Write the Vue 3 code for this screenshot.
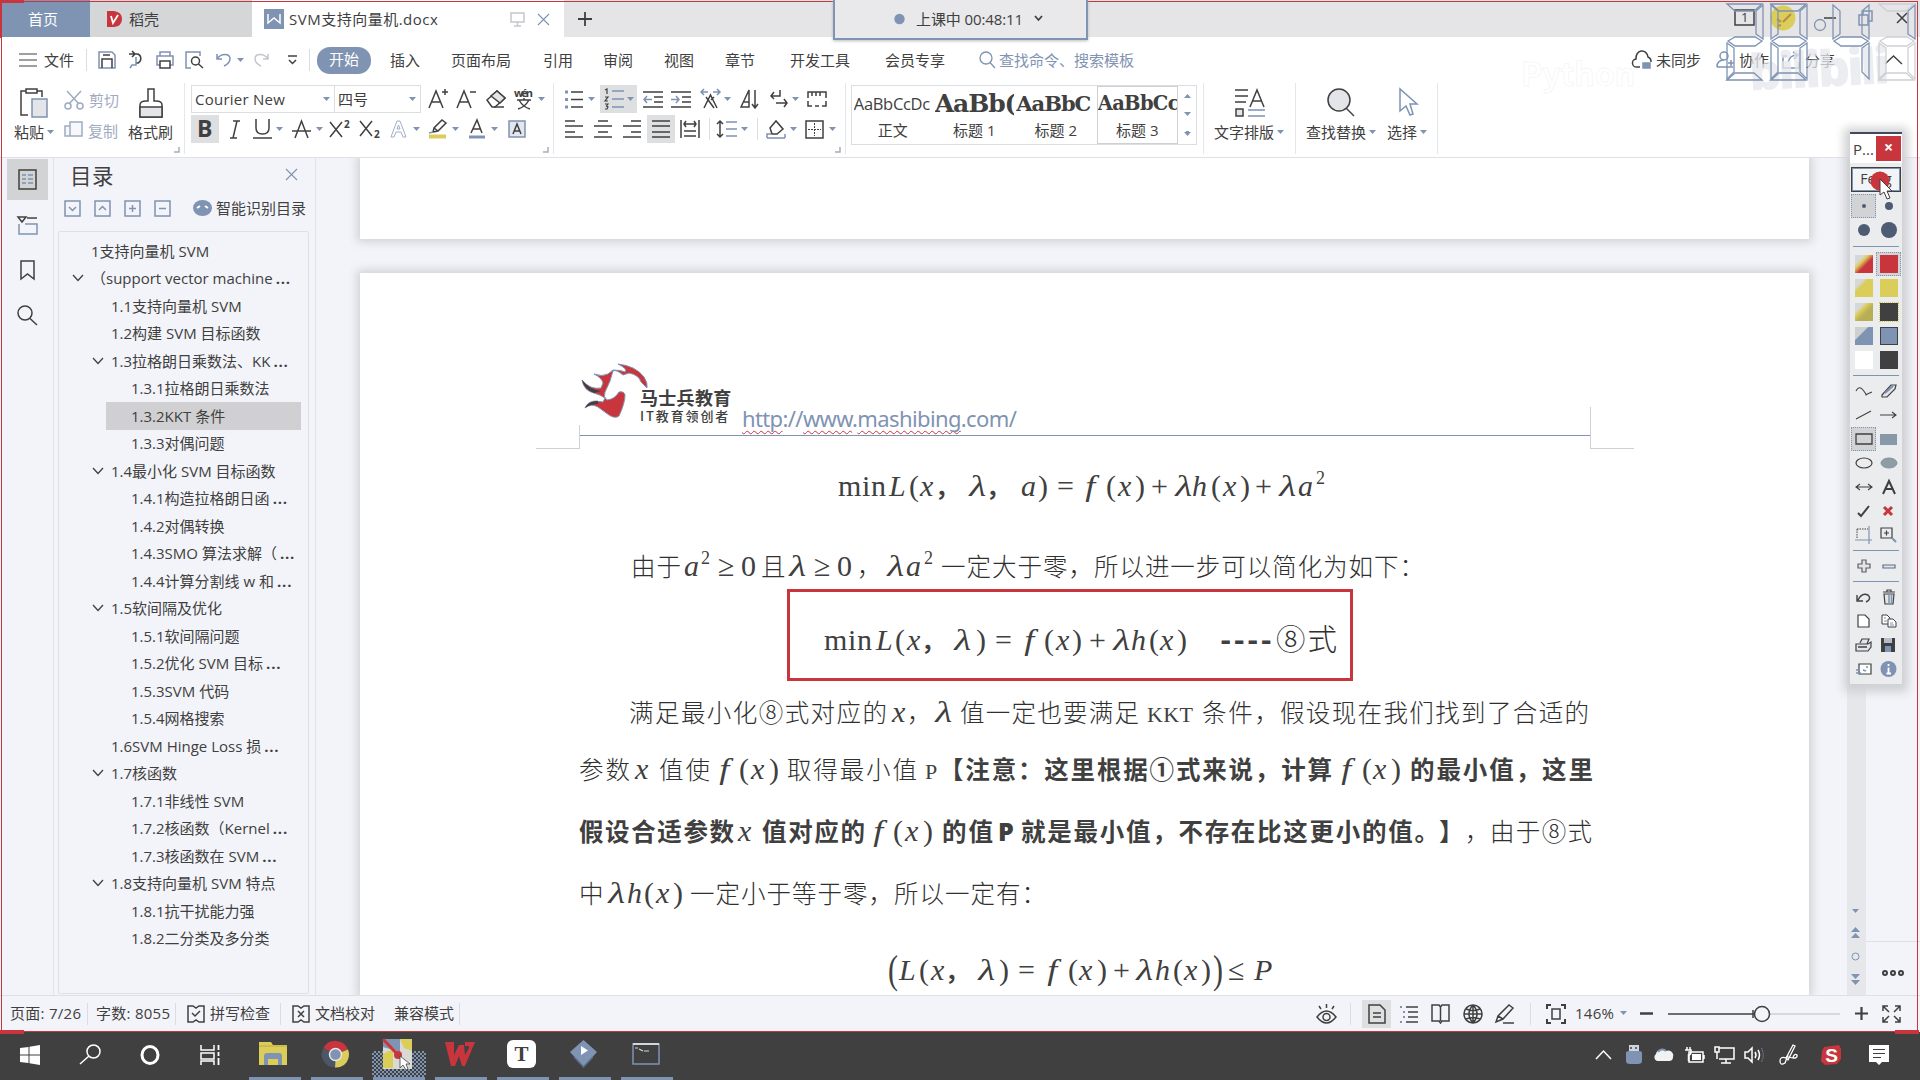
<script setup>
import { h } from 'vue'

const D = '#404040'
const B = '#7f93b2'
const R = '#c9353c'
const Y = '#dbcd5a'
const G = '#e4e5e9'

/* name: [width, height, markup] */
const p = (d, c = D, f = 'none', w = 1.5) => `<path d="${d}" stroke="${c}" fill="${f}" stroke-width="${w}"/>`
const t = (x, y, s, size, extra = '') => `<text x="${x}" y="${y}" font-size="${size}" stroke="none" fill="${D}" font-family="Open Sans, sans-serif" ${extra}>${s}</text>`
const lines = (arr, c = D, w = 1.7) => p(arr.map(([a, y, b]) => `M${a} ${y}H${b}`).join(''), c, 'none', w)

const icons = {
  caret: [7, 5, p('M0 0H7L3.5 4Z', 'none', B)],
  sep: [1, 22, p('M.5 0V22', '#dcdde1', 'none', 1)],
  burger: [18, 14, lines([[0, 1, 18], [0, 7, 18], [0, 13, 18]], D, 1.2)],
  save: [18, 18, p('M1 17V1H14L17 4V17Z', B) + p('M4 17V8H14V17M5 4H12', D)],
  exportI: [18, 18, p('M2 3H11A5 5 0 0 1 11 12H9M5 0L8 3L5 6', D) + p('M9 6V14H5L3 17', B)],
  print: [18, 18, p('M4 5V1H14V5M4 14H1V5H17V14H14', B) + p('M4 10H14V17H4Z', D)],
  preview: [19, 18, p('M6 17H1V1H15V5', B) + p('M14.5 10A4 4 0 1 0 6.5 10A4 4 0 1 0 14.5 10M13.5 13L18 17', D)],
  undo: [15, 14, p('M1 1V6H6M1 6C5 0 14 0 14 6Q14 10 8 13', B)],
  redo: [15, 14, p('M14 1V6H9M14 6C10 0 1 0 1 6Q1 10 7 13', '#c4c6cb')],
  more: [11, 10, p('M1 1H10', D) + p('M2 5L5.5 8.500L9 5', D)],
  search: [19, 18, p('M14 7A6 6 0 1 0 2 7A6 6 0 1 0 14 7M12 11.500L17 17', B, 'none', 1.3)],
  cloud: [21, 18, p('M8 16H5A4 4 0 0 1 4 8A6 7 0 0 1 16 6A5 5 0 0 1 19 11') + p('M11 12H18V17H11Z', B, B)],
  coop: [18, 18, p('M12 5A4 4 0 1 0 4 5A4 4 0 1 0 12 5M1 16Q1 9 8 9M1 16H17M12 12H18M15 9V15', B)],
  share: [19, 18, p('M5 5H1V17H17V11M6 11Q8 4 15 4M11 1L16 4L12 8', B)],
  up: [19, 10, p('M1 9L9.5 1L18 9', D, 'none', 1.4)],
  paste: [28, 30, p('M8 27H1V3H22V9') + p('M6 1H17V5H6Z', D, '#fff') + p('M12 11H27V29H12Z', B, G)],
  cut: [20, 19, p('M3 0L15 13M17 0L5 13', '#9fabc0') + p('M7 15A3 3 0 1 0 1 15A3 3 0 1 0 7 15M19 15A3 3 0 1 0 13 15A3 3 0 1 0 19 15', '#9fabc0')],
  copy: [19, 20, p('M6 15H1V5H6M6 1H18V15H6Z', '#9fabc0', '#f7f8fb')],
  brush: [24, 30, p('M1 29V17Q1 13 7 13H9V1H15V13H17Q23 13 23 17V29Z', D, '#fff') + p('M1 19H23V29H1Z', D, G)],
  aPlus: [20, 20, p('M1 19L8 2L15 19M4 13H12M14 3H20M17 0V6')],
  aMinus: [20, 20, p('M1 19L8 2L15 19M4 13H12M14 3H20')],
  eraser: [20, 18, p('M1 10L11 1L19 8L9 17H6Z', D, '#fff') + p('M5 6L14 13L19 8L11 1Z', D, G) + p('M8 17H18')],
  wen: [20, 22, t(0, 9, 'wén', 11, 'font-weight="bold" textLength="19"') + p('M3 12H17M10 10V12M5 12Q9 19 16 21M15 12Q11 19 4 21')],
  bold: [16, 20, t(0, 18, 'B', 23, 'font-weight="bold"')],
  italic: [12, 19, p('M4 1H11M1 18H8M8 1L4 18')],
  under: [20, 20, p('M3 0V9Q3 15 9.5 15T16 9V0M0 19H19')],
  strike: [19, 18, p('M3 18L9.500 1L16 18M0 11H19')],
  supX: [21, 18, p('M0 2L12 17M12 2L0 17') + t(14, 8, '2', 10, 'font-weight="bold"')],
  subX: [21, 18, p('M0 1L12 16M12 1L0 16') + t(14, 18, '2', 10, 'font-weight="bold"')],
  outA: [18, 18, p('M1 17L7 1H10L16 17H13L11 12H6L4 17ZM7 9H10L8.500 5Z', '#a3afc4', 'none', 1)],
  marker: [21, 20, p('M1 17.500H18', Y, 'none', 4) + p('M5 13L6 9L14 1L18 4L10 12L5 13ZM6 9L10 12', D) + p('M1 14L5 13', B)],
  colA: [18, 19, p('M3 13L9 0L14 13M5 9H12', D) + p('M1 17H17', B, 'none', 3)],
  boxA: [18, 18, p('M1 1H17V17H1Z', B, '#e3e6ee') + p('M5 14L9 4L13 14M6 11H12')],
  bullets: [20, 19, lines([[7, 2, 19], [7, 9.5, 19], [7, 17, 19]]) + p('M1 2H4M1 9.500H4M1 17H4', B, 'none', 3)],
  numbers: [30, 20, p('M8 2H20M8 10H20M8 18H20', B) + p('M1 1L3 0V5M1 8H4L1 12H4M1 15H4L2.500 17L4 18L3 20H1', D, 'none', 1.2) + p('M23 8H30L26.500 12Z', 'none', B)],
  outdent: [20, 17, lines([[0, 1, 20], [11, 6, 20], [11, 11, 20], [0, 16, 20]]) + p('M9 8.500H1M4 5L1 8.500L4 12', B)],
  indent: [20, 17, lines([[0, 1, 20], [11, 6, 20], [11, 11, 20], [0, 16, 20]]) + p('M0 8.500H8M5 5L8 8.500L5 12', B)],
  widthA: [21, 20, p('M1 3H8M13 3H20M4 0L1 3L4 6M17 0L20 3L17 6', B) + p('M4 19L10.500 6L17 19M6 8L14 19M14 8L11 11')],
  sortA: [19, 20, p('M1 18L9 1V18Z', D) + p('M4 13H9', D) + p('M15 1V19M12 15L15 19L18 15', D)],
  wrap: [18, 20, p('M10 1V7H1M4 3L1 7L4 10', D) + p('M6 14H17M14 10L17 14L14 18', D)],
  ruler: [20, 16, p('M1 7V1H19V7M5 1V5M9 1V5M13 1V5') + p('M1 10V15H5M8 15H12M15 15H19V10', D, 'none', 1.5)],
  alignL: [18, 18, lines([[0, 1, 10], [0, 6, 18], [0, 12, 10], [0, 17, 18]])],
  alignC: [18, 18, lines([[4, 1, 14], [0, 6, 18], [4, 12, 14], [0, 17, 18]])],
  alignR: [18, 18, lines([[8, 1, 18], [0, 6, 18], [8, 12, 18], [0, 17, 18]])],
  justify: [18, 18, lines([[0, 1, 18], [0, 6, 18], [0, 12, 18], [0, 17, 18]])],
  distrib: [20, 18, p('M1 0V18M19 0V18M4 4H16M6 1L4 4L6 7M14 1L16 4L14 7') + lines([[4, 11, 16], [4, 16, 16]])],
  spacing: [20, 18, p('M3 1V17M0 4L3 1L6 4M0 14L3 17L6 14') + lines([[9, 2, 20], [9, 9, 20], [9, 16, 20]], B)],
  fill: [20, 19, p('M4 8L10 1L17 9L11 14H6Z') + p('M1 18V14H5M19 18V14M1 18H19', B)],
  border: [19, 19, p('M1 1H18V18H1Z') + '<path d="M9.500 3V16M3 9.500H16" stroke="#404040" stroke-dasharray="2 1"/>'],
  corner: [6, 6, p('M5 0V5H0', '#a9adb6')],
  typeset: [30, 28, lines([[0, 1, 13], [0, 7, 13], [0, 13, 11]]) + p('M15 18L22 1L29 18M18 12H26') + p('M1 20H8V27H1Z', D, G) + lines([[13, 21, 30], [13, 27, 30]], B)],
  find: [28, 29, `<ellipse cx="12" cy="12" rx="11" ry="11" fill="${G}" stroke="${D}" stroke-width="1.500"/>` + p('M19 20L27 28')],
  pointer: [19, 29, p('M1 1V23L7 18L11 27L14 26L11 16H18Z', B, '#fff')],
  docLines: [19, 21, p('M1 1H18V20H1Z') + p('M4 6H8M10 6H15M4 10H8M10 10H15M4 14H8M10 14H15', B)],
  outline: [20, 19, p('M0 1H8L4 6ZM9 2H19') + p('M1 8V18H19V8H7', B)],
  bookmark: [15, 21, p('M1 1H14V19L7.500 14L1 19Z')],
  searchL: [21, 21, p('M15 8A7 7 0 1 0 1 8A7 7 0 1 0 15 8M13 13.500L20 20')],
  x: [13, 13, p('M1 1L12 12M12 1L1 12', B, 'none', 1.1)],
  boxDown: [17, 17, p('M1 1H16V16H1Z', B) + p('M5 7L8.500 10.500L12 7', B)],
  boxUp: [17, 17, p('M1 1H16V16H1Z', B) + p('M5 10L8.500 6.500L12 10', B)],
  boxPlus: [17, 17, p('M1 1H16V16H1Z', B) + p('M5 8.500H12M8.500 5V12', B)],
  boxMinus: [17, 17, p('M1 1H16V16H1Z', B) + p('M5 8.500H12', B)],
  ai: [19, 16, `<ellipse cx="9.500" cy="8" rx="9.500" ry="8" fill="${B}"/>` + p('M4 8L7 6M12 6L15 8', '#fff', 'none', 2)],
  down: [12, 8, p('M1 1L6 6.500L11 1', D, 'none', 1.3)],
  okBook: [18, 18, p('M1 1H6L9 3L12 1H17V17H12L9 15L6 17H1Z') + p('M5 8L8 11L13 6', D)],
  xBook: [18, 18, p('M1 1H6L9 3L12 1H17V17H12L9 15L6 17H1Z') + p('M6 6L12 12M12 6L6 12', D)],
  eye: [21, 20, p('M1 13Q10.500 1 20 13Q10.500 25 1 13ZM10.500 0V4M3 2L5 5M18 2L16 5') + '<circle cx="10.500" cy="13" r="3.500" stroke="#404040" fill="none" stroke-width="1.500"/>'],
  pageV: [18, 20, p('M1 1H12L17 6V19H1Z') + p('M5 9H13M5 13H13')],
  listV: [18, 18, lines([[6, 2, 18], [8, 7, 18], [8, 12, 18], [6, 17, 18]]) + p('M0 2H2M3 7H5M3 12H5M0 17H2', B, 'none', 2)],
  book: [19, 20, p('M1 1H8L9.500 3L11 1H18V17H11L9.500 19L8 17H1ZM9.500 3V17')],
  globe: [20, 20, p('M19 10A9 9 0 1 0 1 10A9 9 0 1 0 19 10M1 10H19M10 1V19M10 1Q2 10 10 19M10 1Q18 10 10 19M3 5Q10 8 17 5M3 15Q10 12 17 15')],
  pen: [20, 20, p('M1 18L3 12L14 1L18 4L8 15L1 18ZM3 12L8 15M8 19H19')],
  fitP: [18, 18, p('M0 4V0H4M14 0H18V4M18 14V18H14M4 18H0V14', D, 'none', 2) + p('M5 4H13V14H5Z')],
  minus: [13, 3, p('M0 1.500H13', D, 'none', 2.5)],
  plusB: [13, 13, p('M0 6.500H13M6.500 0V13', D, 'none', 2.2)],
  plus: [14, 14, p('M0 7H14M7 0V14', D, 'none', 1.8)],
  slider: [172, 18, p('M0 9H86', D) + p('M102 9H172', '#cfd0d4') + p('M85 5V13') + '<circle cx="94" cy="9" r="7.500" stroke="#404040" fill="#f3f4f9" stroke-width="1.500"/>'],
  full: [19, 18, p('M1 6V1H6M1 1L7 7M13 1H18V6M18 1L12 7M1 12V17H6M1 17L7 11M13 17H18V12M18 17L12 11')],
  monitor: [15, 15, p('M1 1H14V10H1ZM7.500 10V14M4 14H11', '#c6c8cc')],
  docer: [15, 18, p('M0 1H7Q15 2 15 9T7 17H0ZM4 5', 'none', R) + p('M4 6L6 13L11 5', '#fff', 'none', 1.8)],
  wps: [20, 20, p('M0 0H20V20H0Z', 'none', B) + p('M4 5V14L10 9L16 14V5', '#fff')],
  dot: [11, 12, `<circle cx="5.500" cy="6" r="5.200" fill="${B}"/>`],
  downB: [9, 7, p('M1 1L4.500 5L8 1', D, 'none', 1.8)],
  badge1: [21, 17, p('M1 1H20V16H1Z', D) + t(7, 13, '1', 13)],
  avatar: [26, 26, `<circle cx="13" cy="13" r="12.500" fill="${Y}"/>` + p('M7 14L11 17M13 17L21 9M8 21L11 20', '#b98b4a', 'none', 2)],
  min: [12, 2, p('M0 1H12')],
  restore: [15, 16, p('M5 5V1H14V11H10M1 5H10V15H1Z', B)],
  close: [12, 12, p('M1 1L11 11M11 1L1 11')],
  /* taskbar */
  win: [20, 20, p('M0 3L8.500 2V9.500H0ZM9.500 1.800L20 0V9.500H9.500ZM0 10.500H8.500V18L0 17ZM9.500 10.500H20V20L9.500 18.200Z', 'none', '#fff')],
  tSearch: [22, 21, p('M21 7.500A6.500 6.500 0 1 0 8 7.500A6.500 6.500 0 1 0 21 7.500M10 12L1 20', '#fff')],
  ring: [20, 20, p('M18 10A8 8.500 0 1 0 2 10A8 8.500 0 1 0 18 10', '#fff', 'none', 3)],
  tview: [21, 20, p('M1 0V5H14V0M1 8H14V14H1ZM1 20V16H14V20', '#fff') + p('M18.500 0V5M18.500 7V11M18.500 13V20', '#fff', 'none', 1.8)],
  folder: [29, 24, p('M0 0H12L14 3H28V23H0Z', 'none', Y) + p('M0 4H28', '#c5a83f', 'none', 1) + p('M5 23V14Q5 11 8 11H20Q23 11 23 14V23H19V17H9V23Z', 'none', B)],
  chrome: [27, 27, p('M13.500 13.500L1.500 7A13.500 13.500 0 0 1 26 8.500Z', 'none', R) + p('M13.500 13.500L26 8.500A13 13 0 0 1 13 26.500Z', 'none', Y) + p('M13.500 13.500L1.500 7A13 13 0 0 0 13 26.500Z', 'none', '#4b5666') + `<circle cx="13.500" cy="13.500" r="6" fill="${B}" stroke="#e8e8e8" stroke-width="1.500"/>`],
  paint: [31, 31, p('M1 0H30V30H1Z', 'none', '#d9d9d6') + p('M1 0H18V13L1 8Z', 'none', B) + p('M18 0H30V12L22 9ZM1 15L11 10V29H1Z', 'none', Y) + p('M1 0L15 15', R, 'none', 3) + `<circle cx="16" cy="16" r="4" fill="${R}"/>` + p('M18 17V29L21 26L24 31L26 30L24 25H28Z', D, '#fff', 0.8)],
  wpsR: [30, 24, p('M0 0H9L9 13L14 3H19L20 13L24 6V4H20V0H30L20 24H17L14 14L10 24H6L1 4Z', 'none', R)],
  tApp: [29, 28, `<rect width="29" height="28" rx="6" fill="#fff"/><text x="14.500" y="21" font-size="21" font-weight="bold" fill="${D}" text-anchor="middle" font-family="Liberation Serif, serif">T</text>`],
  gem: [29, 28, p('M14.500 0L28 12L14.500 27L1 12Z', 'none', B) + p('M5 17L14.500 27L24 17', '#596a86') + p('M12 6V15L19 10.500Z', 'none', '#fff')],
  term: [28, 22, p('M1 1H27V21H1Z', B) + p('M1 1H27', '#d2d6de', 'none', 2) + p('M3 5H6M7 6L11 8', '#d2d6de', 'none', 1.200) + p('M12 8H17', '#d2d6de', 'none', 1)],
  tUp: [17, 10, p('M1 9L8.500 1L16 9', '#fff')],
  usb: [16, 20, p('M3 0H13V6H3Z', 'none', '#cfd5e0') + p('M0 8Q0 6 3 6H13Q16 6 16 8V16Q16 19 12 19H4Q0 19 0 16Z', 'none', B) + p('M5 2V4M10 2V4')],
  tCloud: [21, 14, p('M4 13A4 4 0 0 1 3 6A6 6 0 0 1 13 3A5 5 0 0 1 20 9Q20 13 16 13Z', 'none', '#f1f2f4') + p('M5 4A5 5 0 0 1 13 3', B, 'none', 2)],
  battery: [21, 16, p('M5 5H19V15H5ZM20 8V12', '#fff') + p('M8 7H17V13H8Z', 'none', '#fff') + p('M3 0V3M6 0V3M1 3H7V5Q7 8 4.500 8V14', '#fff')],
  pc: [21, 18, p('M5 2H20V13H5M12 13V17M7 17H17M1 1H5V6H1ZM3 6V13', '#fff')],
  speaker: [21, 16, p('M1 5H4L8 1V15L4 11H1ZM11 5Q13 8 11 11M14 3Q17 8 14 13', '#fff') + '<path d="M17.500 1Q21 8 17.500 15" stroke="#7f93b2" fill="none" stroke-dasharray="1.500 1"/>'],
  tPen: [21, 20, p('M7 13L14 0L16 1L9 15ZM7 13Q1 11 1 16T6 18L9 10M9 12Q19 15 18 10Q15 8 14 13', '#fff', 'none', 1.3)],
  sogou: [21, 20, p('M3 2L18 0L20 4V14L16 19L4 20L0 16L1 6Z', 'none', R) + '<text x="10.500" y="17" font-size="19" font-weight="bold" fill="#fff" text-anchor="middle" font-family="Liberation Sans, sans-serif">S</text>'],
  note: [21, 20, p('M0 0H20V17H13L10 20L7 17H0Z', 'none', '#fff') + p('M4 4.500H16M4 8.500H16M4 12.500H12', D, 'none', 1.2)],
  /* drawing palette */
  curve: [18, 12, p('M1 6Q4 0 8 5T11 10T17 7', D, 'none', 1.1)],
  rubber: [16, 14, p('M1 11L10 1H15L14 5L6 13H1Z', D, G, 1.2) + p('M4 9L12 2', B, 'none', 2)],
  line: [17, 10, p('M1 9L16 1', D, 'none', 1.1)],
  arrow: [18, 8, p('M0 4H16M12 1L16 4L12 7', D, 'none', 1.1)],
  rect: [18, 12, p('M1 1H17V11H1Z', D, 'none', 1.3)],
  rectF: [17, 11, p('M0 0H17V11H0Z', 'none', '#8798a8')],
  oval: [18, 12, `<ellipse cx="9" cy="6" rx="8" ry="5" fill="none" stroke="${D}" stroke-width="1.200"/>`],
  ovalF: [18, 12, '<ellipse cx="9" cy="6" rx="8" ry="5" fill="#8f9ca0" stroke="#7f93b2"/>'],
  both: [18, 8, p('M1 4H17M5 1L1 4L5 7M13 1L17 4L13 7', D, 'none', 1.1)],
  letterA: [14, 15, p('M1 14L7 1L13 14M3 9H11', D, 'none', 2)],
  tick: [13, 13, p('M1 8L4 11L12 1', D, 'none', 2)],
  cross: [11, 11, p('M1 1L9 9M9 1L1 9', R, 'none', 3)],
  crop: [18, 18, '<path d="M2 3H13M2 3V13" stroke="#404040" stroke-dasharray="1.500 1"/>' + p('M14 0V18M0 14H17', B, 'none', 1.2)],
  zoomP: [17, 16, p('M1 1H12V11H1ZM4 6H9M6.500 3.500V8.500', D, 'none', 1.2) + p('M12 11L16 15', B, 'none', 2)],
  plusO: [14, 14, p('M5 1H9V5H13V9H9V13H5V9H1V5H5Z', '#5b5f66', G, 1.2)],
  minusO: [14, 5, p('M1 1H13V4H1Z', '#5b6f8e', G, 1.2)],
  undoB: [15, 11, p('M1 3V9H7M2 8Q6 0 12 3Q16 7 10 10', D, 'none', 1.4)],
  trash: [14, 16, p('M1 3H13M5 3V1H9V3M2 5H12L11 15H3Z', D, G, 1.2) + p('M7 6V14M9.500 6V14', B, 'none', 1.5)],
  page: [13, 14, p('M1 1H8L12 5V13H1Z', D, '#fff', 1.2)],
  pages: [16, 14, p('M1 1H6L9 4V10H1Z', D, '#fff', 1) + p('M7 5H12L15 8V13H7Z', D, '#fff', 1) + p('M3 4H5M3 7H6M9 9H12M9 11H13', B, 'none', 1)],
  printer: [17, 14, p('M5 5L7 1H14L12 6M1 6H13L16 4V9L13 13H1Z', D, G, 1.2) + p('M3 9H12', D)],
  disk: [15, 14, p('M0 0H14V14H0Z', 'none', D) + p('M3 0H11V5H3Z', 'none', '#b5bccb') + p('M4 8H10V14H4Z', 'none', B)],
  mail: [16, 12, p('M3 1H15V11H3Z', D, '#fff', 1.2) + p('M10 4H12M7 7L10 8M0 7H4M0 10H5', B)],
  info: [17, 16, `<circle cx="8.500" cy="8" r="8" fill="${B}"/>` + p('M8.500 3V5M8.500 6.500V12M6.500 12.500H11', '#fff', 'none', 1.8)],
}

const Ico = ({ n }) => {
  const [w, hh, m] = icons[n]
  return h('svg', { width: w, height: hh, viewBox: `0 0 ${w} ${hh}`, class: 'ico', fill: 'none', innerHTML: m })
}
Ico.props = ['n']

/* Spreads letters so the run takes the given width. */
const spread = (el, w) => {
  const n = [...el.textContent].length
  el.style.letterSpacing = `${(w - el.getBoundingClientRect().width) / Math.max(1, n - 1)}px`
}

/* A row of cells; each cell runs up to the start of the next one. item: [start, text | @icon, class, width] */
const Lane = ({ from = 0, items }) => {
  const cells = [h('i', { class: 'cell', style: { width: `${items[0][0] - from}px` } })]
  items.forEach(([x, v, c = '', w], k) => {
    const next = items[k + 1]
    const style = next ? { width: `${next[0] - x}px` } : {}
    let inner
    if (v[0] === '@') {
      inner = c ? h('span', { class: ['hold', c], style: { width: `${w}px` } }, [h(Ico, { n: v.slice(1) })]) : h(Ico, { n: v.slice(1) })
    } else {
      inner = h('span', { class: ['run', c, { lam: v === 'λ', eff: v === 'f' }], onVnodeMounted: (vn) => w && spread(vn.el, w) }, v)
    }
    cells.push(h('div', { class: 'cell', style }, [inner]))
  })
  return h('div', { class: 'lane' }, cells)
}
Lane.props = ['from', 'items']

const menu = [
  [19, '@burger'], [44, '文件'], [86, '@sep'], [98, '@save'], [127, '@exportI'], [156, '@print'], [185, '@preview'], [216, '@undo'], [237, '@caret'],
  [254, '@redo'], [287, '@more'], [309, '@sep'], [317, '开始', 'pill'], [390, '插入'], [451, '页面布局'], [543, '引用'], [603, '审阅'], [664, '视图'],
  [725, '章节'], [790, '开发工具'], [885, '会员专享'], [978, '@search'], [999, '查找命令、搜索模板', 'blue'], [1632, '@cloud'], [1656, '未同步'],
  [1716, '@coop'], [1739, '协作'], [1782, '@share'], [1805, '分享'], [1884, '@up'],
]
const font1 = [[428, '@aPlus'], [456, '@aMinus'], [486, '@eraser'], [514, '@wen'], [538, '@caret']]
const font2 = [
  [191, '@bold', 'sel', 28], [229, '@italic'], [253, '@under'], [276, '@caret'], [292, '@strike'], [316, '@caret'], [330, '@supX'], [360, '@subX'],
  [390, '@outA'], [413, '@caret'], [428, '@marker'], [452, '@caret'], [468, '@colA'], [491, '@caret'], [508, '@boxA'],
]
const para1 = [
  [564, '@bullets'], [588, '@caret'], [600, '@numbers', 'sel', 37], [643, '@outdent'], [671, '@indent'], [700, '@widthA'], [724, '@caret'],
  [740, '@sortA'], [770, '@wrap'], [792, '@caret'], [807, '@ruler'],
]
const para2 = [
  [565, '@alignL'], [594, '@alignC'], [623, '@alignR'], [647, '@justify', 'sel', 28], [680, '@distrib'], [709, '@sep'], [717, '@spacing'],
  [741, '@caret'], [757, '@sep'], [766, '@fill'], [790, '@caret'], [805, '@border'], [829, '@caret'],
]
const styles = [['AaBbCcDc', '正文', 's1'], ['AaBb(', '标题 1', 's2'], ['AaBbC', '标题 2', 's3'], ['AaBbCc', '标题 3', 's4']]

const outline = [
  [0, '1支持向量机 SVM'], [0, '（support vector machine', 1, 1], [1, '1.1支持向量机 SVM'], [1, '1.2构建 SVM 目标函数'],
  [1, '1.3拉格朗日乘数法、KK', 1, 1], [2, '1.3.1拉格朗日乘数法'], [2, '1.3.2KKT 条件'], [2, '1.3.3对偶问题'], [1, '1.4最小化 SVM 目标函数', 0, 1],
  [2, '1.4.1构造拉格朗日函', 1], [2, '1.4.2对偶转换'], [2, '1.4.3SMO 算法求解（', 1], [2, '1.4.4计算分割线 w 和', 1], [1, '1.5软间隔及优化', 0, 1],
  [2, '1.5.1软间隔问题'], [2, '1.5.2优化 SVM 目标', 1], [2, '1.5.3SVM 代码'], [2, '1.5.4网格搜索'], [1, '1.6SVM Hinge Loss 损', 1],
  [1, '1.7核函数', 0, 1], [2, '1.7.1非线性 SVM'], [2, '1.7.2核函数（Kernel', 1], [2, '1.7.3核函数在 SVM', 1], [1, '1.8支持向量机 SVM 特点', 0, 1],
  [2, '1.8.1抗干扰能力强'], [2, '1.8.2二分类及多分类'],
]

const m = 'm'
const mi = 'm it'
const text = {
  a: [[838, 'min', m, 48], [889, 'L', mi], [909, '(', m], [920, 'x', mi], [938, '，', 'cm'], [970, 'λ', mi], [989, '，', 'cm'], [1021, 'a', mi], [1038, ')', m], [1057, '=', m],
    [1087, 'f', mi], [1106, '(', m], [1118, 'x', mi], [1135, ')', m], [1151, '+', m], [1176, 'λ', mi], [1192, 'h', mi], [1211, '(', m], [1223, 'x', mi], [1240, ')', m], [1255, '+', m],
    [1280, 'λ', mi], [1298, 'a', mi], [1316, '2', 'sup']],
  b: [[631, '由于', 'z', 50], [684, 'a', mi], [701, '2', 'sup'], [718, '≥', m], [741, '0', m], [761, '且', 'z'], [790, 'λ', mi], [814, '≥', m], [837, '0', m], [857, '，', 'z'], [888, 'λ', mi],
    [906, 'a', mi], [924, '2', 'sup'], [941, '一定大于零，', 'z', 152], [1094, '所以进一步可以简化为如下：', 'z', 330]],
  c: [[824, 'min', m, 48], [876, 'L', mi], [895, '(', m], [907, 'x', mi], [924, '，', 'cm'], [955, 'λ', mi], [976, ')', m], [995, '=', m], [1026, 'f', mi], [1044, '(', m], [1056, 'x', mi],
    [1072, ')', m], [1089, '+', m], [1114, 'λ', mi], [1131, 'h', mi], [1149, '(', m], [1160, 'x', mi], [1177, ')', m], [1217, '----', 'dash', 58], [1276, '⑧式', 'zz', 61]],
  d: [[629, '满足最小化⑧式对应的', 'z', 258], [892, 'x', mi], [907, '，', 'z'], [936, 'λ', mi], [960, '值一定也要满足', 'z', 179], [1147, 'KKT', 'mono', 46], [1202, '条件，', 'z', 77], [1280, '假设现在我们找到了合适的', 'z', 309]],
  e: [[579, '参数', 'z', 51], [635, 'x', mi], [659, '值使', 'z', 51], [721, 'f', mi], [739, '(', m], [751, 'x', mi], [769, ')', m], [787, '取得最小值', 'z', 130], [925, 'P', 'mono'],
    [939, '【注意：这里根据①式来说，计算', 'z bd', 393], [1343, 'f', mi], [1362, '(', m], [1373, 'x', mi], [1391, ')', m], [1410, '的最小值，这里', 'z bd', 183]],
  f: [[579, '假设合适参数', 'z bd', 155], [738, 'x', mi], [762, '值对应的', 'z bd', 103], [875, 'f', mi], [893, '(', m], [905, 'x', mi], [923, ')', m], [942, '的值', 'z bd', 51], [998, 'P', 'pb'],
    [1021, '就是最小值，不存在比这更小的值。', 'z bd', 418], [1439, '】', 'z bd'], [1465, '，', 'z'], [1490, '由于⑧式', 'z', 102]],
  g: [[579, '中', 'z'], [609, 'λ', mi], [627, 'h', mi], [644, '(', m], [656, 'x', mi], [673, ')', m], [690, '一定小于等于零，所以一定有：', 'z', 356]],
  h: [[888, '(', 'm tall'], [899, 'L', mi], [919, '(', m], [931, 'x', mi], [948, '，', 'cm'], [979, 'λ', mi], [999, ')', m], [1018, '=', m], [1049, 'f', mi], [1068, '(', m], [1079, 'x', mi],
    [1097, ')', m], [1113, '+', m], [1137, 'λ', mi], [1155, 'h', mi], [1173, '(', m], [1184, 'x', mi], [1201, ')', m], [1213, ')', 'm tall'], [1228, '≤', m], [1254, 'P', mi]],
}

const statusItems = [
  [10, '页面: 7/26', '', 71], [87, '@sep'], [96, '字数: 8055', '', 74], [175, '@sep'], [187, '@okBook'], [210, '拼写检查'], [280, '@sep'], [292, '@xBook'], [315, '文档校对'],
  [394, '兼容模式'], [459, '@sep'], [1316, '@eye'], [1350, '@sep'], [1362, '@pageV', 'sel', 29], [1400, '@listV'], [1431, '@book'], [1463, '@globe'], [1495, '@pen'], [1530, '@sep'],
  [1547, '@fitP'], [1575, '146%', '', 39], [1620, '@caret'], [1640, '@minus'], [1668, '@slider'], [1855, '@plusB'], [1882, '@full'],
]
const taskLeft = [[20, '@win'], [79, '@tSearch'], [140, '@ring'], [200, '@tview']]
const apps = ['folder', 'chrome', 'paint', 'wpsR', 'tApp', 'gem', 'term']
const tray = [[1595, '@tUp'], [1626, '@usb'], [1653, '@tCloud'], [1684, '@battery'], [1714, '@pc'], [1744, '@speaker'], [1779, '@tPen'], [1821, '@sogou'], [1869, '@note']]

const swatches = [['#c9353c', '#c9353c', 'on'], ['#dbcd5a', '#dbcd5a', ''], ['#b9ae55', '#404040', 'dot'], ['#7f93b2', '#7f93b2', 'edge'], ['#ffffff', '#404040', '']]
const tools1 = ['curve', 'rubber', 'line', 'arrow', 'rect', 'rectF', 'oval', 'ovalF', 'both', 'letterA', 'tick', 'cross', 'crop', 'zoomP']
const tools2 = ['undoB', 'trash', 'page', 'pages', 'printer', 'disk', 'mail', 'info']

/* seven-segment outlines of the overlaid clock */
const seg = {
  t: 'M1 1H36L28 8H9Z', tl: 'M1 2L8 8V31L1 36Z', tr: 'M37 2L30 8V31L37 36Z', m: 'M2 38L9 34H29L36 38L29 43H9Z',
  bl: 'M1 40L8 45V69L1 76Z', br: 'M37 40L30 45V69L37 76Z', b: 'M1 77L9 70H28L36 77Z',
}
const digits = [[2, ['t', 'tr', 'm', 'bl', 'b'], B], [46, ['t', 'tl', 'tr', 'm', 'bl', 'br', 'b'], B], [108, ['tl', 'tr', 'm', 'br'], B], [154, ['tr'], B], [154, ['t', 'm', 'bl', 'br', 'b'], '#cdd0d6']]
</script>

<template>
  <div class="app">
    <header class="tabs">
      <div class="tab home">首页</div>
      <div class="tab docer"><Ico n="docer" />稻壳</div>
      <div class="tab active">
        <Ico n="wps" /><span class="name">SVM支持向量机.docx</span>
        <Ico n="monitor" class="mon" /><Ico n="x" />
      </div>
      <Ico n="plus" class="add" />
      <div class="timer"><Ico n="dot" /><span>上课中 00:48:11</span><Ico n="downB" /></div>
      <div class="win"><Ico n="badge1" /><Ico n="avatar" /><Ico n="min" /><Ico n="restore" /><Ico n="close" /></div>
    </header>

    <Lane class="menu" :items="menu" />

    <section class="ribbon">
      <div class="group clip">
        <div class="big paste"><Ico n="paste" /><span>粘贴<Ico n="caret" /></span></div>
        <div class="pair">
          <span><Ico n="cut" />剪切</span>
          <span><Ico n="copy" />复制</span>
        </div>
        <div class="big"><Ico n="brush" /><span>格式刷</span></div>
        <Ico n="corner" class="crn" />
      </div>
      <div class="group fontg">
        <div class="row1">
          <div class="combo fam"><span>Courier New</span><Ico n="caret" /></div>
          <div class="combo size"><span>四号</span><Ico n="caret" /></div>
          <Lane :from="421" :items="font1" />
        </div>
        <Lane class="row2" :from="185" :items="font2" />
        <Ico n="corner" class="crn" />
      </div>
      <div class="group parag">
        <Lane class="row1" :from="554" :items="para1" />
        <Lane class="row2" :from="554" :items="para2" />
        <Ico n="corner" class="crn" />
      </div>
      <div class="group styleg">
        <div class="gallery">
          <div v-for="s in styles" :key="s[1]" class="style" :class="s[2]"><b>{{ s[0] }}</b><span>{{ s[1] }}</span></div>
          <div class="scr"><Ico n="caret" class="flip" /><Ico n="caret" /><Ico n="caret" class="bar" /></div>
        </div>
      </div>
      <div class="group g5"><div class="big"><Ico n="typeset" /><span>文字排版<Ico n="caret" /></span></div></div>
      <div class="group g6">
        <div class="big"><Ico n="find" /><span>查找替换<Ico n="caret" /></span></div>
        <div class="big"><Ico n="pointer" /><span>选择<Ico n="caret" /></span></div>
      </div>
    </section>

    <main class="body">
      <nav class="rail">
        <div class="on"><Ico n="docLines" /></div>
        <div><Ico n="outline" /></div>
        <div><Ico n="bookmark" /></div>
        <div><Ico n="searchL" /></div>
      </nav>
      <aside class="toc">
        <div class="head"><span>目录</span><Ico n="x" /></div>
        <div class="acts"><Ico n="boxDown" /><Ico n="boxUp" /><Ico n="boxPlus" /><Ico n="boxMinus" /><Ico n="ai" class="ai" /><span>智能识别目录</span></div>
        <div class="tree">
          <div v-for="(o, k) in outline" :key="k" class="node" :class="['l' + o[0], { cur: k === 6 }]">
            <i class="chev"><Ico v-if="o[3]" n="down" /></i><span class="lbl">{{ o[1] }}</span><b v-if="o[2]">...</b>
          </div>
        </div>
      </aside>
      <div class="canvas">
        <div class="sheet prev"></div>
        <div class="sheet">
          <div class="head">
            <div class="mark left"></div>
            <div class="brand">
              <svg class="bull" width="68" height="56" viewBox="0 0 68 56">
                <path d="M37 1Q55 3 63 14Q67 20 66 25L60 19Q58 12 48 10L42 12Q35 6 32 8L29 18L24 29Q22 34 26 37Q34 36 38 29Q43 28 44 32Q44 40 38 53Q34 56 28 52L17 44Q10 40 4 45Q7 38 15 38L22 39L24 35Q20 32 13 30Q3 28 1 17Q9 27 20 25L22 20Q21 15 13 11Q21 14 27 11L32 7Q40 7 44 9Q47 6 37 1Z" fill="#c9353c" stroke="#7f93b2" stroke-width="1" />
                <path d="M1 17Q9 27 20 28L13 30Q3 26 1 17ZM4 45Q7 38 17 38L17 41Q9 41 4 45Z" fill="#404040" />
              </svg>
              <div class="names"><b>马士兵教育</b><span>IT教育领创者</span></div>
              <div class="url"><u>http</u>://<u>www</u>.<u>mashibing</u>.com/</div>
            </div>
            <div class="mark right"></div>
          </div>
          <Lane class="ln a" :from="360" :items="text.a" />
          <Lane class="ln b" :from="360" :items="text.b" />
          <div class="boxed"><Lane class="ln c" :from="790" :items="text.c" /></div>
          <Lane class="ln d" :from="360" :items="text.d" />
          <Lane class="ln e" :from="360" :items="text.e" />
          <Lane class="ln f" :from="360" :items="text.f" />
          <Lane class="ln g" :from="360" :items="text.g" />
          <Lane class="ln h" :from="360" :items="text.h" />
        </div>
      </div>
      <div class="vbar">
        <Ico n="caret" />
        <svg width="9" height="12" viewBox="0 0 9 12"><path d="M4.500 0L9 5H0ZM4.500 6L9 11H0Z" fill="#7f93b2" /></svg>
        <svg width="9" height="9" viewBox="0 0 9 9"><circle cx="4.500" cy="4.500" r="3.500" fill="none" stroke="#7f93b2" /></svg>
        <svg width="9" height="12" viewBox="0 0 9 12"><path d="M4.500 5L9 0H0ZM4.500 11L9 6H0Z" fill="#7f93b2" /></svg>
      </div>
      <div class="side"><div class="dots"><i></i><i></i><i></i></div></div>
    </main>

    <Lane class="status" :items="statusItems" />

    <footer class="taskbar">
      <Lane class="tl" :items="taskLeft" />
      <div class="apps"><div v-for="a in apps" :key="a" class="appi" :class="{ hot: a === 'paint' }"><Ico :n="a" /></div></div>
      <Lane class="tray" :from="1590" :items="tray" />
    </footer>

    <div class="palette">
      <div class="cap"><span>P...</span><b>×</b></div>
      <div class="field">Feng</div>
      <div class="sizes"><i class="cellp on"><em class="d1"></em></i><i class="cellp"><em class="d2"></em></i><i class="cellp"><em class="d3"></em></i><i class="cellp"><em class="d4"></em></i></div>
      <hr>
      <div class="swatches">
        <template v-for="(s, k) in swatches" :key="k">
          <i class="cellp"><em :class="{ half: k < 4 }" :style="{ '--c': s[0] }"></em></i>
          <i class="cellp" :class="s[2]"><em :style="{ '--c': s[1] }"></em></i>
        </template>
      </div>
      <hr>
      <div class="tools"><i v-for="n in tools1" :key="n" class="cellp" :class="{ on: n === 'rect' }"><Ico :n="n" /></i></div>
      <hr>
      <div class="tools"><i class="cellp"><Ico n="plusO" /></i><i class="cellp"><Ico n="minusO" /></i></div>
      <hr>
      <div class="tools"><i v-for="n in tools2" :key="n" class="cellp"><Ico :n="n" /></i></div>
      <svg class="cursor" width="26" height="30" viewBox="0 0 26 30">
        <circle cx="10" cy="10" r="9.500" fill="#c9353c" />
        <path d="M10 8V24L14 21L17 28L20 27L17 20H22Z" fill="#fff" stroke="#404040" />
      </svg>
    </div>

    <div class="stamp py">Python</div>
    <div class="stamp bili">bilibili</div>
    <svg class="clock" width="194" height="82" viewBox="0 0 194 82">
      <g v-for="(d, k) in digits" :key="k" :transform="`translate(${d[0]} 1)`" fill="none" :stroke="d[2]" stroke-width="1.300"><path v-for="s in d[1]" :key="s" :d="seg[s]" /></g>
      <circle cx="96" cy="23" r="5.500" fill="none" stroke="#7f93b2" stroke-width="1.300" />
    </svg>

    <div class="frame"><i class="c1"></i><i class="c2"></i><i class="c3"></i><i class="c4"></i><i class="c5"></i></div>
  </div>
</template>

<style>
body { margin: 0; background: #404040; overflow: hidden; }
</style>

<style scoped>
.app { position: relative; width: 1920px; height: 1080px; display: flex; flex-direction: column; overflow: hidden; color: #404040; background: #fff; font: 15px/20px "Open Sans", "Noto Sans CJK SC", sans-serif; }
.app :deep(.ico) { flex: none; display: block; overflow: visible; }
.app :deep(.lane) { display: flex; align-items: center; }
.app :deep(.cell) { flex: none; display: flex; align-items: center; white-space: nowrap; }
.app :deep(.run) { display: inline-block; flex: none; white-space: pre; }
.app :deep(.hold) { flex: none; display: flex; align-items: center; justify-content: center; height: 28px; }
.app :deep(.sel) { background: #dedfe1; }
.app :deep(.blue) { color: #7f93b2; }

.tabs { flex: none; height: 37px; display: flex; align-items: center; background: #e5e5e7; }
.tab { height: 37px; display: flex; align-items: center; padding-top: 1px; box-sizing: border-box; }
.home { width: 90px; justify-content: center; background: #7f93b2; color: #fff; padding-right: 4px; }
.docer { width: 162px; background: #d5d6d7; padding-left: 17px; gap: 7px; }
.active { width: 312px; background: #fff; padding-left: 12px; }
.active .name { width: 221px; padding-left: 5px; letter-spacing: 0.5px; }
.active .mon { margin-right: 12px; }
.add { margin-left: 14px; }
.timer { width: 255px; height: 40px; align-self: flex-start; margin-left: 241px; border: solid #7f93b2; border-width: 0 2px 2px; box-sizing: border-box; display: flex; align-items: center; gap: 11px; padding-left: 59px; padding-bottom: 1px; background: #e9e9eb; box-shadow: 0 1px 3px #bbb; z-index: 1; }
.timer span { letter-spacing: -0.1px; }
.win { display: flex; align-items: center; margin-left: auto; gap: 15px; padding: 0 12px 2px 0; }
.win > :nth-child(3) { margin-left: 13px; }
.win > :nth-child(4) { margin-left: 7px; }
.win > :nth-child(5) { margin-left: 8px; }

.menu { flex: none; height: 46px; box-sizing: border-box; }
.menu :deep(.run) { margin-top: -1px; }
.menu :deep(.pill) { width: 54px; height: 27px; line-height: 25px; text-align: center; border-radius: 13px; background: #7f93b2; color: #fff; margin-top: 0; }

.ribbon { flex: none; height: 75px; display: flex; border-bottom: 1px solid #dfe0e4; box-sizing: border-box; }
.group { position: relative; box-sizing: border-box; height: 71px; border-right: 1px solid #e6e7eb; padding-top: 2px; }
.crn { position: absolute; right: 4px; bottom: 1px; }
.clip { width: 185px; display: flex; }
.big { display: flex; flex-direction: column; align-items: center; padding-top: 3px; gap: 3px; line-height: 22px; }
.big > span { display: flex; align-items: center; gap: 3px; }
.paste { width: 40px; margin-left: 14px; }
.paste > :deep(.ico) { margin-right: 1px; }
.pair { margin-left: 10px; width: 64px; display: flex; flex-direction: column; gap: 9px; padding-top: 4px; color: #9fabc0; }
.pair span { display: flex; align-items: center; gap: 5px; line-height: 22px; }
.fontg { width: 369px; }
.row1 { display: flex; height: 28px; }
.row2 { height: 28px; margin-top: 2px; }
.combo { box-sizing: border-box; height: 28px; border: 1px solid #dcdde1; display: flex; align-items: center; justify-content: space-between; padding: 0 4px 0 3px; }
.fam { width: 144px; margin-left: 6px; }
.fam span { letter-spacing: 0.25px; }
.size { width: 86px; border-left: 0; }
.parag { width: 292px; }
.styleg { width: 358px; padding-left: 5px; }
.gallery { width: 346px; height: 60px; box-sizing: border-box; border: 1px solid #dcdde1; display: flex; }
.style { width: 81.500px; box-sizing: border-box; display: flex; flex-direction: column; align-items: center; border: 1px solid transparent; }
.style b { width: 78px; height: 33px; line-height: 34px; overflow: hidden; font-weight: 400; white-space: nowrap; font-size: 16.500px; letter-spacing: -0.3px; }
.style span { line-height: 21px; }
.s2 b, .s3 b, .s4 b { width: 79px; font-family: "DejaVu Serif", serif; font-weight: 700; }
.s2 b { font-size: 25px; letter-spacing: -1.100px; }
.s3 b { font-size: 21px; letter-spacing: -1px; }
.s4 b { font-size: 19.500px; letter-spacing: -0.700px; }
.s4 { border: 1px solid #cfd0d4; }
.scr { flex: 1; display: flex; flex-direction: column; align-items: center; justify-content: space-around; }
.flip { transform: rotate(180deg); }
.bar { box-shadow: 0 -3px 0 -2px #7f93b2; }
.g5 { width: 92px; padding-left: 10px; }
.g6 { width: 142px; display: flex; padding-left: 10px; gap: 11px; }
.g5 .big, .g6 .big { align-items: flex-start; }
.g5 .big > :deep(.ico) { margin: 1px 0 1px 21px; }
.g6 .big > :deep(.ico) { margin: 0 0 1px 21px; }
.g6 .big + .big > :deep(.ico) { margin-left: 12px; }

.body { flex: none; height: 837px; display: flex; background: #f3f4f9; }
.rail { width: 54px; border-right: 1px solid #e2e3e7; display: flex; flex-direction: column; padding: 1px 0 0 7px; box-sizing: border-box; gap: 4px; }
.rail div { width: 41px; height: 41px; display: flex; align-items: center; justify-content: center; }
.rail div + div { padding-top: 1px; box-sizing: border-box; }
.rail .on { background: #d2d3d5; }
.toc { width: 262px; box-sizing: border-box; border-right: 1px solid #e2e3e7; padding: 0 6px 1px 4px; display: flex; flex-direction: column; }
.toc .head { height: 36px; display: flex; align-items: center; justify-content: space-between; padding: 0 11px 0 12px; font-size: 21.500px; letter-spacing: 0.5px; }
.toc .head > :deep(.ico) { margin-top: -4px; }
.acts { height: 28px; display: flex; align-items: center; gap: 13px; padding-left: 6px; }
.acts .ai { margin-left: 9px; margin-right: -9px; }
.tree { flex: 1; margin-top: 9px; border: 1px solid #dfe0e4; box-sizing: border-box; padding-top: 5px; border-radius: 2px; }
.node { height: 27.500px; display: flex; align-items: center; white-space: nowrap; }
.node .chev { width: 20px; padding-left: 1px; box-sizing: border-box; }
.node b { margin-left: 3px; letter-spacing: 0.8px; }
.l0 { padding-left: 12px; }
.l1 { padding-left: 32px; }
.l2 { padding-left: 52px; }
.node.cur { margin: 0 7px 0 47px; padding-left: 5px; background: #d0d0d2; }

.canvas { flex: none; width: 1531px; display: flex; flex-direction: column; overflow: hidden; padding-left: 44px; box-sizing: border-box; }
.sheet { flex: none; width: 1449px; height: 722px; background: #fff; box-shadow: 0 0 9px 3px #d0d1d4; display: flex; flex-direction: column; }
.sheet.prev { height: 81px; margin-bottom: 34px; }
.sheet > .head { height: 176px; display: flex; align-items: flex-end; padding-left: 176px; }
.mark { box-sizing: border-box; width: 44px; border-bottom: 1px solid #cfd0d4; }
.mark.left { height: 24px; border-right: 1px solid #cfd0d4; }
.mark.right { height: 42px; border-left: 1px solid #cfd0d4; }
.brand { width: 1010px; height: 72px; margin-bottom: 13px; border-bottom: 1px solid #7f93b2; display: flex; }
.bull { margin-left: 1px; }
.names { margin-left: -9px; padding-top: 24px; display: flex; flex-direction: column; width: 101px; }
.names b { font: 700 18px/20px "Noto Sans CJK SC", sans-serif; letter-spacing: 0.3px; }
.names span { font: 500 13px/18px "Noto Sans CJK SC", sans-serif; letter-spacing: 1.900px; white-space: nowrap; }
.url { margin-left: 1px; padding-top: 40px; font: 22px/31px "Noto Sans", "Open Sans", sans-serif; color: #7f93b2; letter-spacing: -0.62px; white-space: nowrap; }
.url u { text-decoration: underline wavy #c9353c 1px; text-underline-offset: 3px; text-decoration-skip-ink: none; }
.app :deep(.ln) { flex: none; align-items: baseline; }
.app :deep(.ln .cell) { align-items: baseline; }
.ln.a { height: 94px; line-height: 74px; }
.ln.b { height: 46px; line-height: 45px; }
.boxed { width: 566px; height: 92px; margin-left: 427px; box-sizing: border-box; border: 3px solid #c9353c; }
.ln.c { line-height: 90px; height: 86px; }
.ln.d { height: 60px; line-height: 61px; }
.ln.e { height: 56px; line-height: 55px; }
.ln.f { height: 68px; line-height: 67px; }
.ln.g { height: 56px; line-height: 55px; }
.ln.h { height: 74px; line-height: 98px; overflow: hidden; }
.ln :deep(.m) { font-family: "Liberation Serif", serif; font-size: 30px; }
.ln :deep(.it) { font-style: italic; }
.ln :deep(.lam) { transform: scaleX(1.300); transform-origin: 20% 50%; }
.ln :deep(.eff) { margin-left: -1px; transform: scaleX(1.200); }
.ln :deep(.sup) { font-family: "Liberation Serif", serif; font-size: 18px; position: relative; top: -12px; }
.ln :deep(.tall) { transform: scale(1, 1.300); }
.ln :deep(.cm) { font: 700 24px/1 "Noto Sans CJK SC", sans-serif; margin-left: -3px; }
.ln :deep(.z) { font-family: "Noto Sans CJK SC", sans-serif; font-size: 24.500px; font-weight: 300; color: #303030; }
.ln :deep(.zz) { font-family: "Noto Sans CJK SC", sans-serif; font-size: 29.500px; font-weight: 300; color: #303030; }
.ln :deep(.bd) { font-weight: 700; color: #404040; }
.ln :deep(.mono) { font-family: "Liberation Serif", serif; font-size: 22px; }
.ln :deep(.pb) { font-weight: 800; font-size: 25px; }
.ln :deep(.dash) { font-family: "Liberation Mono", monospace; font-weight: 700; font-size: 29px; }

.vbar { width: 19px; background: #e6e7ea; display: flex; flex-direction: column; align-items: center; justify-content: flex-end; gap: 13px; padding: 0 2px 9px 0; box-sizing: border-box; }
.side { flex: 1; display: flex; flex-direction: column; justify-content: flex-end; }
.dots { height: 54px; padding-top: 28px; box-sizing: border-box; border-top: 1px solid #dfe0e4; display: flex; justify-content: center; gap: 2px; }
.dots i { width: 6px; height: 6px; box-sizing: border-box; border: 2px solid #404040; border-radius: 50%; }

.status { flex: none; height: 37px; background: #f3f4f9; border-top: 1px solid #dfe0e4; box-sizing: border-box; padding-bottom: 1px; }
.status :deep(.run) { margin-top: -2px; }
.taskbar { flex: none; height: 48px; background: #404040; display: flex; color: #fff; }
.tl { width: 244px; padding-bottom: 3px; box-sizing: border-box; }
.apps { display: flex; width: 1346px; }
.appi { box-sizing: border-box; width: 52px; height: 48px; display: flex; align-items: center; justify-content: center; border-bottom: 3px solid #7f93b2; padding: 0 3px 1px 0; margin: 0 5px; }
.hot { position: relative; z-index: 0; }
.hot::before { content: ""; position: absolute; z-index: -1; inset: 19px -1px 0; background: repeating-conic-gradient(#7f93b2 0 25%, #404040 0 50%) 0 0 / 4px 4px; }
.tray { padding-bottom: 3px; box-sizing: border-box; }

.palette { position: absolute; left: 1850px; top: 132px; width: 52px; height: 552px; background: #ebecee; border-top: 2px solid #404a5a; box-shadow: 0 2px 9px 6px #cfd0d3; box-sizing: border-box; display: flex; flex-direction: column; }
.cap { height: 29px; margin-bottom: 4px; background: #fff; display: flex; align-items: center; justify-content: space-between; padding: 0 1px 0 3px; }
.cap b { width: 25px; height: 25px; background: #c9353c; color: #fff; text-align: center; line-height: 22px; font-size: 16px; }
.field { height: 25px; box-sizing: border-box; margin: 0 1px 2px; border: 1px solid #404040; outline: 1px solid #7f93b2; outline-offset: -2px; text-align: center; font-size: 14px; line-height: 22px; background: #f3f4f6; }
.sizes, .swatches, .tools { display: flex; flex-wrap: wrap; padding: 0 1px; }
.cellp { box-sizing: border-box; width: 25px; height: 24px; display: flex; align-items: center; justify-content: center; }
.cellp.on { background: #d2d3d5; outline: 1px dotted #7f93b2; outline-offset: -1px; }
.sizes em { border-radius: 50%; background: #4d5b74; }
.d1 { width: 4px; height: 4px; }
.d2 { width: 8px; height: 8px; }
.d3 { width: 12px; height: 12px; }
.d4 { width: 16px; height: 16px; }
.palette hr { width: 46px; height: 1px; border: 0; background: #7f93b2; margin: 3px auto; flex: none; }
.palette .sizes + hr { margin: 4px auto 5px; }
.swatches em { width: 18px; height: 18px; background: var(--c); }
.swatches em.half { background: linear-gradient(135deg, #d6d7d9 25%, #dbcd5a 38%, var(--c) 58%); }
.swatches .cellp:nth-child(7) em { background: linear-gradient(135deg, #cfd0d2 35%, #7f93b2 38%); }
.dot em { outline: 1px dotted #dbcd5a; }
.edge em { outline: 1px solid #404040; outline-offset: -1px; }
.cursor { position: absolute; left: 20px; top: 37px; }

.stamp { position: absolute; pointer-events: none; white-space: nowrap; }
.py { left: 1521px; top: 54px; font: 700 32px/36px "Noto Sans CJK SC", sans-serif; color: #fff; -webkit-text-stroke: 0.500px #f1f1f3; }
.bili { left: 1749px; top: 38px; font: 800 50px/60px "Open Sans", sans-serif; color: #e6e7eb; opacity: 0.75; letter-spacing: -3px; transform: rotate(-3deg); }
.clock { position: absolute; left: 1724px; top: 2px; }
.frame { position: absolute; inset: 1px 2px 48px 1px; border: 1px solid #c9353c; pointer-events: none; }
.frame i { position: absolute; background: #c9353c; }
.c1 { left: -2px; top: -2px; width: 24px; height: 3px; }
.c2 { left: -2px; top: -2px; width: 2px; height: 38px; }
.c3 { left: 922px; top: -2px; width: 75px; height: 2px; }
.c4 { left: -2px; bottom: -3px; width: 24px; height: 4px; }
.c5 { right: -2px; bottom: -3px; width: 24px; height: 4px; }
</style>
